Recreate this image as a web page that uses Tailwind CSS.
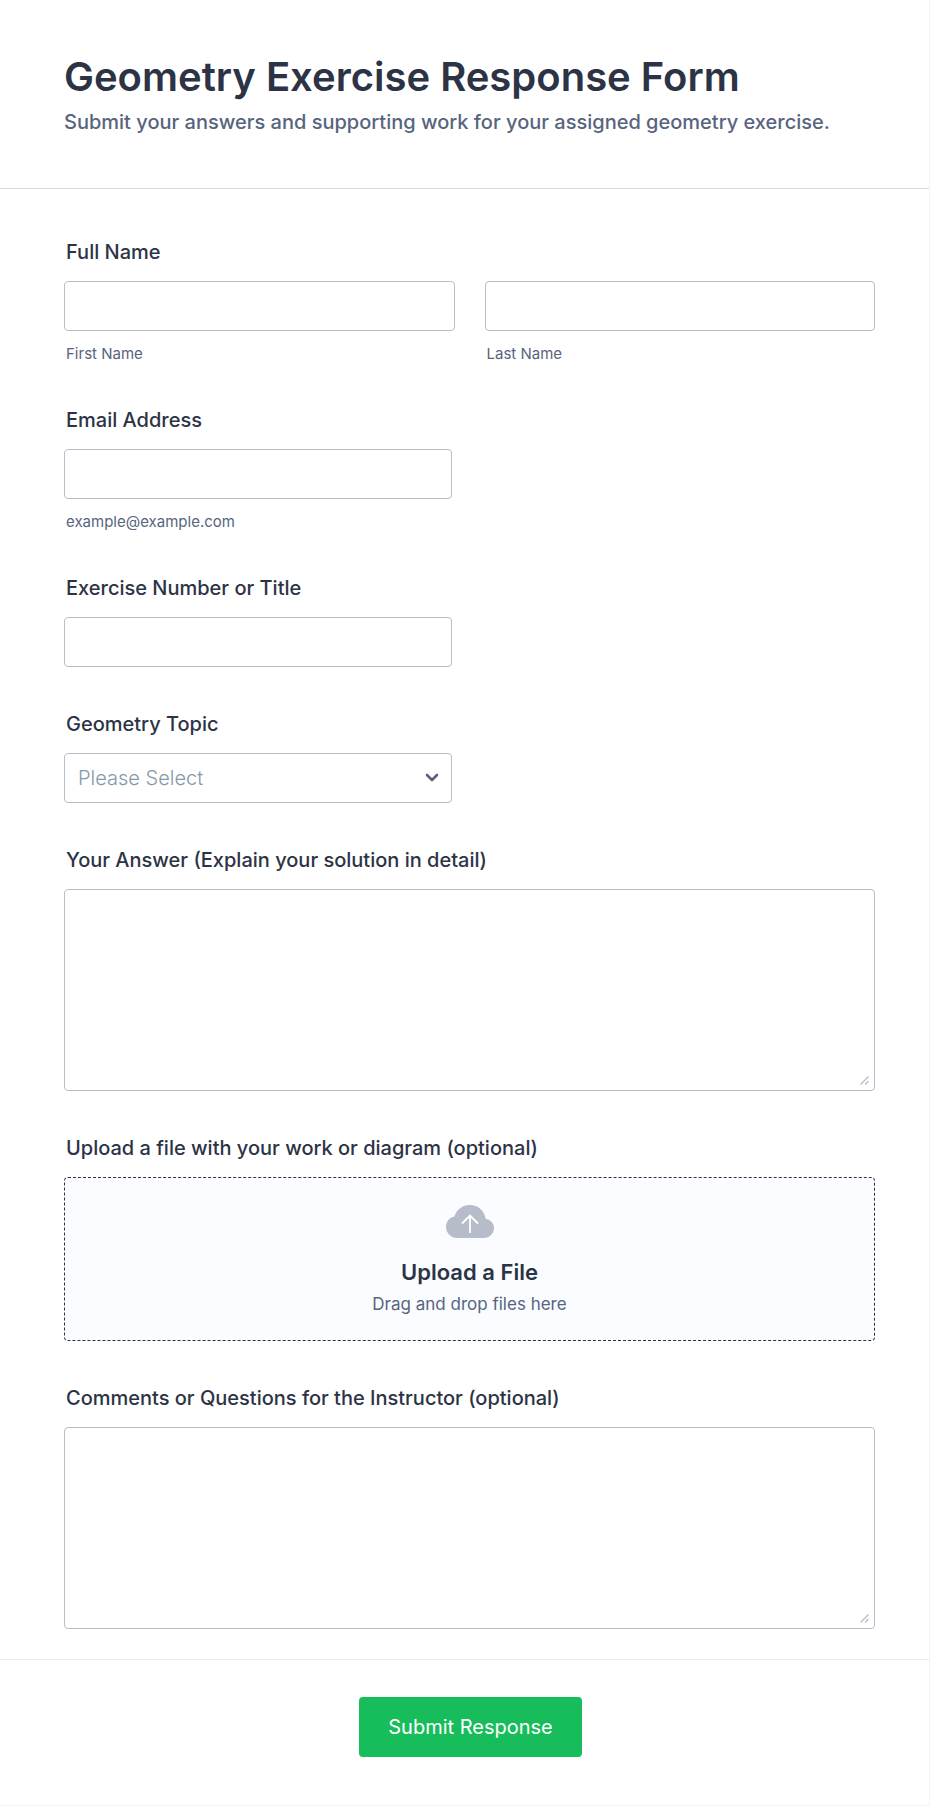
<!DOCTYPE html>
<html lang="en">
<head>
    <meta charset="UTF-8">
    <meta name="viewport" content="width=device-width, initial-scale=1.0">
    <title>Geometry Exercise Response Form</title>
    <script src="https://cdn.jsdelivr.net/npm/@tailwindcss/browser@4"></script>
</head>
<body class="bg-white font-[Inter,sans-serif] text-[#2c3345]">

    <form class="w-full border-r border-b border-[#f3f3f8]">

        <!-- Header -->
        <header class="border-b border-[#d7d8e1] py-[53px] pl-16 pr-[54px]">
            <h1 class="text-[40px] leading-12 font-semibold">Geometry Exercise Response Form</h1>
            <p class="mt-2 text-xl leading-[26px] font-medium text-[#57647e]">Submit your answers and supporting work for your assigned geometry exercise.</p>
        </header>

        <!-- Fields -->
        <div class="flex flex-col gap-11 pt-[50px] pb-[30px] pl-16 pr-[54px]">

            <fieldset>
                <legend class="block pl-[2px] mb-4 text-xl leading-[26px] font-medium">Full Name</legend>
                <div class="grid grid-cols-2 gap-[30px]">
                    <div>
                        <input id="firstName" type="text" class="block w-full h-[50px] px-3 border border-[#b8bdc9] rounded text-xl">
                        <label for="firstName" class="block mt-3 pl-[2px] text-[15px] leading-[22px] -mb-0.5 text-[#57647e]">First Name</label>
                    </div>
                    <div>
                        <input id="lastName" type="text" class="block w-full h-[50px] px-3 border border-[#b8bdc9] rounded text-xl">
                        <label for="lastName" class="block mt-3 pl-[2px] text-[15px] leading-[22px] -mb-0.5 text-[#57647e]">Last Name</label>
                    </div>
                </div>
            </fieldset>

            <div>
                <label for="email" class="block pl-[2px] mb-4 text-xl leading-[26px] font-medium">Email Address</label>
                <input id="email" type="email" aria-describedby="emailHint" class="block w-full max-w-[388px] h-[50px] px-3 border border-[#b8bdc9] rounded text-xl">
                <p id="emailHint" class="mt-3 pl-[2px] text-[15px] leading-[22px] -mb-0.5 text-[#57647e]">example@example.com</p>
            </div>

            <div>
                <label for="exercise" class="block pl-[2px] mb-4 text-xl leading-[26px] font-medium">Exercise Number or Title</label>
                <input id="exercise" type="text" class="block w-full max-w-[388px] h-[50px] px-3 border border-[#b8bdc9] rounded text-xl">
            </div>

            <div>
                <label for="topic" class="block pl-[2px] mb-4 text-xl leading-[26px] font-medium">Geometry Topic</label>
                <div class="relative max-w-[388px]">
                    <select id="topic" class="appearance-none block w-full h-[50px] px-[13px] border border-[#b8bdc9] rounded bg-white text-xl font-light text-[#8499a8]">
                        <option>Please Select</option>
                    </select>
                    <svg class="pointer-events-none absolute right-[13px] top-[20px] w-[14px] h-[9px]" viewBox="0 0 14 9" fill="none" stroke="#57607c" stroke-width="2.6" stroke-linecap="round" stroke-linejoin="round">
                        <path d="M2 2l5 5 5-5"/>
                    </svg>
                </div>
            </div>

            <div>
                <label for="answer" class="block pl-[2px] mb-4 text-xl leading-[26px] font-medium">Your Answer (Explain your solution in detail)</label>
                <div class="relative">
                    <textarea id="answer" class="block w-full h-[202px] p-3 border border-[#b8bdc9] rounded resize-none text-xl"></textarea>
                    <svg class="pointer-events-none absolute right-[6px] bottom-[6px] w-[9px] h-[9px]" viewBox="0 0 9 9" stroke="#b8bdc9" stroke-width="1.3">
                        <path d="M0.5 8.5l8-8M5 8.5l3.5-3.5"/>
                    </svg>
                </div>
            </div>

            <div>
                <label for="upload" class="block pl-[2px] mb-4 text-xl leading-[26px] font-medium">Upload a file with your work or diagram (optional)</label>
                <label for="upload" class="flex flex-col items-center h-[164px] pt-[27px] border border-dashed border-[#2c3345] rounded bg-[#fafcff] cursor-pointer">
                    <svg class="w-12 h-[33px]" viewBox="0 0 48 33" fill="none">
                        <path d="M11 33C5 33 0 28 0 22C0 16.5 3.5 12.5 8.5 11.5C10.5 4.5 16.5 0 24 0C32 0 38 5 39.8 14C44.5 14.5 48 18.5 48 23C48 28.5 43.5 33 38 33Z" fill="#b6bcc9"/>
                        <path d="M24 28V10.5M16 18.5l8-8 8 8" stroke="#fff" stroke-width="1.8"/>
                    </svg>
                    <span class="mt-5 text-[22px] leading-7 font-semibold">Upload a File</span>
                    <span class="mt-1.5 text-[17px] leading-6 text-[#57647e]">Drag and drop files here</span>
                    <input id="upload" type="file" class="sr-only">
                </label>
            </div>

            <div>
                <label for="comments" class="block pl-[2px] mb-4 text-xl leading-[26px] font-medium">Comments or Questions for the Instructor (optional)</label>
                <div class="relative">
                    <textarea id="comments" class="block w-full h-[202px] p-3 border border-[#b8bdc9] rounded resize-none text-xl"></textarea>
                    <svg class="pointer-events-none absolute right-[6px] bottom-[6px] w-[9px] h-[9px]" viewBox="0 0 9 9" stroke="#b8bdc9" stroke-width="1.3">
                        <path d="M0.5 8.5l8-8M5 8.5l3.5-3.5"/>
                    </svg>
                </div>
            </div>
        </div>

        <!-- Submit -->
        <div class="flex justify-center border-t border-[#ebebf2] pt-[37px] pb-12 pl-3">
            <button type="submit" class="h-[60px] px-[29px] rounded bg-[#18bd5b] text-xl text-white cursor-pointer">Submit Response</button>
        </div>
    </form>

</body>
</html>
